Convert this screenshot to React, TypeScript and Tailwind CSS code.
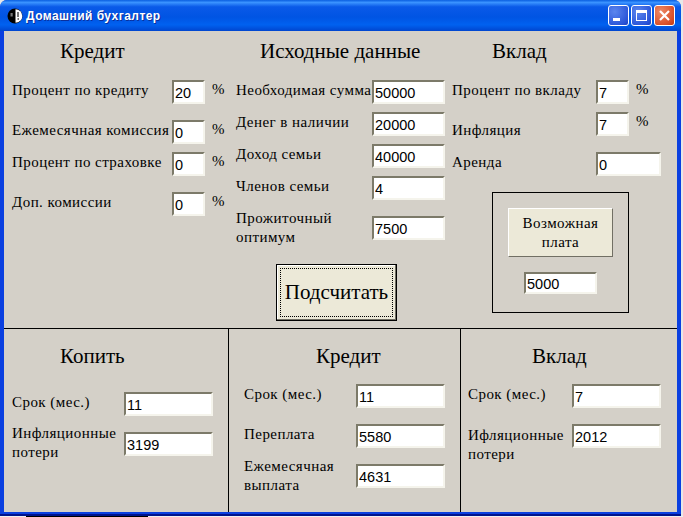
import type { ReactNode } from 'react'

const labelFont = "font-['Liberation_Serif',serif] text-[15px] leading-[19px] tracking-[0.45px] text-black"
const headFont = "font-['Liberation_Serif',serif] text-[21px] leading-[24px] text-black"

function Field({ value, className }: { value: string; className: string }) {
  return (
    <input
      readOnly
      value={value}
      className={`${className} shrink-0 border-2 border-t-[#7c7a69] border-l-[#7c7a69] border-r-[#f5f4ec] border-b-[#f5f4ec] bg-white pl-[1px] pt-[2px] font-['Liberation_Sans',sans-serif] text-[14.5px] leading-[18px] text-black outline-none`}
    />
  )
}

function Row({ label, value, labelW, inputW, unit, labelClass = 'mt-[1px]', unitClass = 'mt-0', rowClass = '' }: {
  label: ReactNode
  value: string
  labelW: string
  inputW: string
  unit?: boolean
  labelClass?: string
  unitClass?: string
  rowClass?: string
}) {
  return (
    <div className={`flex h-6 items-start ${rowClass}`}>
      <div className={`${labelW} ${labelClass} shrink-0 whitespace-nowrap ${labelFont}`}>{label}</div>
      <Field value={value} className={`${inputW} h-6`} />
      {unit && <span className={`${unitClass} ml-[7px] ${labelFont}`}>%</span>}
    </div>
  )
}

function TitleBar() {
  return (
    <div className="flex h-[31px] items-center rounded-t-[7px] bg-[linear-gradient(180deg,#0a5fe0_0%,#3a93ff_8%,#0a5ae8_22%,#0054e3_55%,#0061f0_80%,#0045cf_100%)] pl-[7px] pr-[6px]">
      <svg width="16" height="16" viewBox="0 0 16 16" className="shrink-0">
        <circle cx="8" cy="8" r="7.5" fill="#000" />
        <path d="M8.5 1.2a6.8 6.8 0 0 1 0 13.6z" fill="#fff" />
        <path d="M3.5 5h2.2v3.5H3.5zM10 4h2v5h-2zM10.5 10h1.5v2h-1.5z" fill="#777" />
      </svg>
      <span className="ml-[3px] flex-1 whitespace-nowrap font-['Liberation_Sans',sans-serif] text-[12px] font-bold tracking-[0.45px] text-white [text-shadow:1px_1px_0_#0a2f9c]">
        Домашний бухгалтер
      </span>
      <div className="flex gap-[2px]">
        <div className="flex h-[21px] w-[21px] items-end rounded-[3px] border border-white bg-[radial-gradient(circle_at_30%_30%,#5b86ee,#2a55d8_75%,#1c3fc0)] pb-[4px] pl-[4px]">
          <div className="h-[3px] w-[7px] bg-white" />
        </div>
        <div className="flex h-[21px] w-[21px] items-center justify-center rounded-[3px] border border-white bg-[radial-gradient(circle_at_30%_30%,#5b86ee,#2a55d8_75%,#1c3fc0)]">
          <div className="h-[11px] w-[11px] border border-t-[3px] border-white" />
        </div>
        <div className="flex h-[21px] w-[21px] items-center justify-center rounded-[3px] border border-white bg-[radial-gradient(circle_at_30%_30%,#ee8a66,#d9502a_70%,#bf3a14)]">
          <svg width="13" height="13" viewBox="0 0 13 13">
            <path d="M2 2l9 9M11 2l-9 9" stroke="#fff" strokeWidth="2.2" />
          </svg>
        </div>
      </div>
    </div>
  )
}

export default function App() {
  return (
    <div className="flex h-[517px] w-[683px] flex-col bg-[#e8e8e8]">
      <div className="flex h-[516px] w-[681px] flex-col rounded-t-[7px] bg-[#0a3fe0]">
        <TitleBar />
        <div className="mx-[4px] flex w-[673px] flex-col bg-[#d4d0c8]">
          {/* Inputs */}
          <div className="flex h-[298px] border-b border-black">
            <div className="w-[232px] pl-2">
              <div className={`mb-[17px] ml-[48px] pt-[8px] ${headFont}`}>Кредит</div>
              <Row label="Процент по кредиту" value="20" labelW="w-[160px]" inputW="w-[33px]" unit />
              <Row label="Ежемесячная комиссия" value="0" labelW="w-[160px]" inputW="w-[33px]" unit rowClass="mt-4" />
              <Row label="Процент по страховке" value="0" labelW="w-[160px]" inputW="w-[33px]" unit rowClass="mt-2" />
              <Row label="Доп. комиссии" value="0" labelW="w-[160px]" inputW="w-[33px]" unit rowClass="mt-4" />
            </div>
            <div className="w-[216px]">
              <div className={`mb-[17px] ml-[24px] pt-[8px] ${headFont}`}>Исходные данные</div>
              <Row label="Необходимая сумма" value="50000" labelW="w-[136px]" inputW="w-[73px]" />
              <Row label="Денег в наличии" value="20000" labelW="w-[136px]" inputW="w-[73px]" rowClass="mt-2" />
              <Row label="Доход семьи" value="40000" labelW="w-[136px]" inputW="w-[73px]" rowClass="mt-2" />
              <Row label="Членов семьи" value="4" labelW="w-[136px]" inputW="w-[73px]" rowClass="mt-2" />
              <Row
                label={<>Прожиточный<br />оптимум</>}
                value="7500"
                labelW="w-[136px]"
                inputW="w-[73px]"
                labelClass="-mt-[7px]"
                rowClass="mt-4"
              />
              <button className="ml-[40px] mt-6 h-[57px] w-[121px] border border-black bg-[#ece9d8] p-[3px] shadow-[inset_-1px_-1px_0_#716f64,inset_1px_1px_0_#fff]">
                <div className={`flex h-full items-center justify-center border border-dotted border-black font-['Liberation_Serif',serif] text-[21px] text-black`}>
                  Подсчитать
                </div>
              </button>
            </div>
            <div className="flex-1">
              <div className={`mb-[17px] ml-[40px] pt-[8px] ${headFont}`}>Вклад</div>
              <Row label="Процент по вкладу" value="7" labelW="w-[144px]" inputW="w-[33px]" unit />
              <Row label="Инфляция" value="7" labelW="w-[144px]" inputW="w-[33px]" unit labelClass="mt-[9px]" rowClass="mt-2" />
              <Row label="Аренда" value="0" labelW="w-[144px]" inputW="w-[65px]" rowClass="mt-4" />
              <div className="ml-10 mt-4 h-[121px] w-[137px] border border-black pl-[15px] pt-[15px]">
                <button className={`h-[49px] w-[105px] border border-t-white border-l-white border-r-[#716f64] border-b-[#716f64] bg-[#ece9d8] ${labelFont}`}>
                  Возможная<br />плата
                </button>
                <Field value="5000" className="ml-[16px] mt-[15px] block h-[22px] w-[73px]" />
              </div>
            </div>
          </div>

          {/* Results */}
          <div className="flex h-[183px]">
            <div className="w-[225px] border-r border-black pl-2">
              <div className={`mb-[24px] ml-[48px] pt-[15px] ${headFont}`}>Копить</div>
              <Row label="Срок (мес.)" value="11" labelW="w-[112px]" inputW="w-[89px]" />
              <Row
                label={<>Инфляционные<br />потери</>}
                value="3199"
                labelW="w-[112px]"
                inputW="w-[89px]"
                labelClass="-mt-[8px]"
                rowClass="mt-4"
              />
            </div>
            <div className="w-[232px] border-r border-black pl-[15px]">
              <div className={`mb-[16px] ml-[72px] pt-[15px] ${headFont}`}>Кредит</div>
              <Row label="Срок (мес.)" value="11" labelW="w-[112px]" inputW="w-[89px]" />
              <Row label="Переплата" value="5580" labelW="w-[112px]" inputW="w-[89px]" rowClass="mt-4" />
              <Row
                label={<>Ежемесячная<br />выплата</>}
                value="4631"
                labelW="w-[112px]"
                inputW="w-[89px]"
                labelClass="-mt-[7px]"
                rowClass="mt-4"
              />
            </div>
            <div className="flex-1 pl-[7px]">
              <div className={`mb-[16px] ml-[64px] pt-[15px] ${headFont}`}>Вклад</div>
              <Row label="Срок (мес.)" value="7" labelW="w-[104px]" inputW="w-[89px]" />
              <Row
                label={<>Ифляционные<br />потери</>}
                value="2012"
                labelW="w-[104px]"
                inputW="w-[89px]"
                labelClass="mt-[2px]"
                rowClass="mt-4"
              />
            </div>
          </div>
        </div>
        <div className="mt-auto h-[2px] bg-[#00138c]" />
      </div>
      {/* Desktop showing under the window */}
      <div className="h-px bg-[#f0f0f0] pl-[26px]">
        <div className="h-px w-[122px] bg-black" />
      </div>
    </div>
  )
}
